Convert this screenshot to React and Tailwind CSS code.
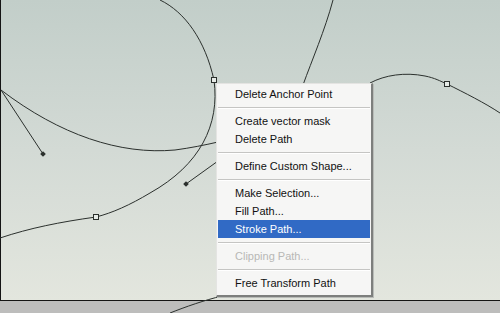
const items = [
  { label: 'Delete Anchor Point' },
  { sep: true },
  { label: 'Create vector mask' },
  { label: 'Delete Path' },
  { sep: true },
  { label: 'Define Custom Shape...' },
  { sep: true },
  { label: 'Make Selection...' },
  { label: 'Fill Path...' },
  { label: 'Stroke Path...', active: true },
  { sep: true },
  { label: 'Clipping Path...', disabled: true },
  { sep: true },
  { label: 'Free Transform Path' },
];

function Anchor({ x, y }) {
  return <rect x={x - 2.5} y={y - 2.5} width="5" height="5" fill="#e6ebe7" stroke="#2a2f2c" strokeWidth="1" />;
}

function Paths() {
  return (
    <svg className="absolute inset-0" width="500" height="313" viewBox="0 0 500 313">
      <g fill="none" stroke="#2b302d" strokeWidth="1">
        {/* big arc from top down to lower left */}
        <path d="M160,0 C185,12 205,40 214,80 C220,125 200,165 150,193 C130,205 112,213 96,217 C60,222 30,228 0,238" />
        {/* curve from left corner under menu */}
        <path d="M1,90 C60,135 120,155 175,150 C190,148 205,145 218,142" />
        {/* direction handles */}
        <path d="M1,90 L43,154" />
        <path d="M218,161 L186,184" />
        {/* top curve going behind the menu */}
        <path d="M333,0 C325,30 312,60 303,85" />
        {/* right hump */}
        <path d="M370,83 C385,75 405,72 425,76 C435,78 440,81 447,84 C465,93 485,103 500,113" />
        {/* tail below the canvas */}
        <path d="M170,313 C185,307 205,300 222,296" />
      </g>
      <rect x="41" y="152" width="4" height="4" fill="#2b302d" transform="rotate(45 43 154)" />
      <rect x="184" y="182" width="4" height="4" fill="#2b302d" transform="rotate(45 186 184)" />
      <Anchor x={214} y={80} />
      <Anchor x={96} y={217} />
      <Anchor x={447} y={84} />
    </svg>
  );
}

function ContextMenu() {
  return (
    <div
      className="absolute left-[216px] top-[83px] w-[157px] bg-[#f6f6f5] border-t border-l border-[#e4e4e2] border-r-2 border-b-2 border-r-[#7d7f7d] border-b-[#7d7f7d] pt-[1px] pb-[3px] shadow-[1px_1px_0_#b9bcb8]"
      style={{ fontFamily: '"Liberation Sans", Arial, sans-serif' }}
    >
      {items.map((it, i) =>
        it.sep ? (
          <div key={i} className="h-[9px] flex items-center px-[1px]">
            <div className="w-full h-[2px] border-t border-[#c5c5c3] border-b border-b-white" />
          </div>
        ) : (
          <div
            key={i}
            className={`h-[18px] mx-[1px] pl-[17px] flex items-center text-[11px] ${
              it.active ? 'bg-[#316ac5] text-white' : it.disabled ? 'text-[#b8b8b6]' : 'text-[#111]'
            }`}
          >
            {it.label}
          </div>
        )
      )}
    </div>
  );
}

export default function App() {
  return (
    <div className="relative w-[500px] h-[313px] overflow-hidden bg-[#bdbdbc]">
      <div className="h-[301px] border-l border-b border-[#141414] bg-gradient-to-b from-[#c2cec9] via-[#d3dad5] to-[#e3e6de]" />
      <Paths />
      <ContextMenu />
    </div>
  );
}
